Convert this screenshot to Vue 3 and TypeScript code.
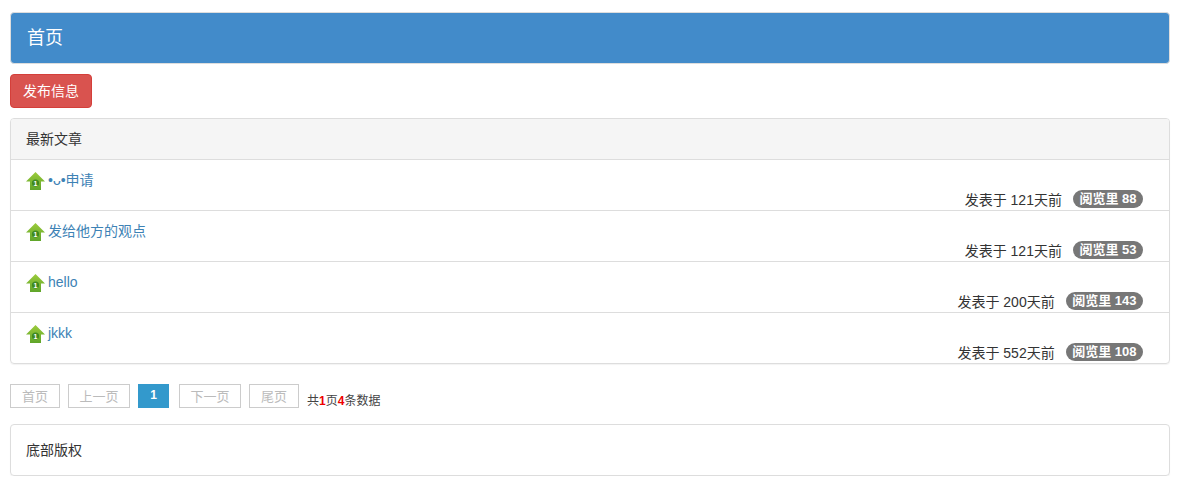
<script setup lang="ts">
interface Post { title: string; days: number; views: number }
const posts: Post[] = [
  { title: '•ᴗ•申请', days: 121, views: 88 },
  { title: '发给他方的观点', days: 121, views: 53 },
  { title: 'hello', days: 200, views: 143 },
  { title: 'jkkk', days: 552, views: 108 },
]
</script>

<template>
  <div class="page">
    <div class="heading">首页</div>
    <button class="publish" type="button">发布信息</button>
    <section class="panel">
      <div class="panel-head">最新文章</div>
      <div v-for="p in posts" :key="p.title" class="row">
        <div class="title-line">
          <svg class="arrow" width="20" height="20" viewBox="0 0 20 20" aria-hidden="true">
            <defs>
              <linearGradient id="ag" x1="0" y1="0" x2="0" y2="1">
                <stop offset="0" stop-color="#9ccb3b" />
                <stop offset="1" stop-color="#5fa52a" />
              </linearGradient>
            </defs>
            <path d="M9.5 1 L19 10.5 L15 10.5 L15 19 L4 19 L4 10.5 L0 10.5 Z" fill="url(#ag)" />
            <circle cx="9.5" cy="12" r="3.6" fill="#3f8a1f" />
            <text x="9.5" y="14.5" text-anchor="middle" class="arrow-num">1</text>
          </svg>
          <a class="title" href="#">{{ p.title }}</a>
        </div>
        <div class="meta">
          <span class="when">发表于 {{ p.days }}天前</span>
          <span class="badge">阅览里 {{ p.views }}</span>
        </div>
      </div>
    </section>
    <nav class="pager">
      <span class="pg wide-2">首页</span>
      <span class="pg wide-3">上一页</span>
      <span class="pg current">1</span>
      <span class="pg wide-3">下一页</span>
      <span class="pg wide-2">尾页</span>
      <span class="summary">共<b>1</b>页<b>4</b>条数据</span>
    </nav>
    <footer class="foot">底部版权</footer>
  </div>
</template>

<style>
html, body { margin: 0; background: #fff; }
</style>

<style scoped>
.page {
  box-sizing: border-box;
  width: 1177px;
  padding: 12px 7px 0 10px;
  font-family: "Liberation Sans", "Noto Sans CJK SC", sans-serif;
  font-size: 14px;
  line-height: 20px;
  color: #333;
  display: flex;
  flex-direction: column;
  align-items: stretch;
}
.heading {
  box-sizing: border-box;
  height: 52px;
  padding: 15px 16px;
  background: #428bca;
  border: 1px solid #ddd;
  border-radius: 4px;
  color: #fff;
  font-size: 18px;
  line-height: 20px;
}
.publish {
  align-self: flex-start;
  box-sizing: border-box;
  width: 82px;
  height: 34px;
  margin-top: 10px;
  padding: 0;
  background: #d9534f;
  border: 1px solid #d43f3a;
  border-radius: 4px;
  color: #fff;
  font: inherit;
}
.panel {
  margin-top: 10px;
  border: 1px solid #ddd;
  border-radius: 4px;
  box-shadow: 0 1px 1px rgba(0, 0, 0, 0.05);
  overflow: hidden;
}
.panel-head {
  box-sizing: border-box;
  height: 41px;
  padding: 10px 15px;
  background: #f5f5f5;
  border-bottom: 1px solid #ddd;
}
.row {
  box-sizing: border-box;
  height: 51px;
  padding: 10px 26px 0 15px;
  border-bottom: 1px solid #ddd;
}
.row:last-child { height: 50px; border-bottom: 0; }
.title-line {
  display: flex;
  align-items: center;
  height: 20px;
}
.arrow { margin-right: 2px; margin-top: 2px; flex: none; }
.arrow-num {
  font-family: "Liberation Sans", sans-serif;
  font-size: 7px;
  font-weight: 700;
  fill: #fff;
}
.title { color: #3d82b5; text-decoration: none; }
.meta {
  display: flex;
  justify-content: flex-end;
  align-items: flex-start;
  height: 20px;
}
.when { margin-right: 11px; }
.badge {
  box-sizing: border-box;
  height: 18px;
  padding: 0 6.5px;
  background: #777;
  border-radius: 10px;
  color: #fff;
  font-size: 13px;
  font-weight: 700;
  line-height: 18px;
  white-space: nowrap;
}
.pager {
  display: flex;
  align-items: flex-start;
  gap: 8px;
  margin-top: 20px;
  height: 24px;
}
.pg {
  box-sizing: border-box;
  height: 24px;
  border: 1px solid #ccc;
  color: #bbb;
  font-size: 13px;
  line-height: 24px;
  text-align: center;
}
.wide-2 { width: 50px; }
.wide-3 { width: 62px; }
.pg.current {
  width: 31px;
  margin-right: 2px;
  background: #3399cc;
  border-color: #3399cc;
  color: #fff;
  font-weight: 700;
  font-size: 12px;
  line-height: 20px;
}
.summary {
  font-size: 12px;
  line-height: 35px;
  color: #444;
}
.summary b { color: #e00; }
.foot {
  box-sizing: border-box;
  height: 52px;
  margin-top: 16px;
  padding: 15px;
  border: 1px solid #ddd;
  border-radius: 4px;
  box-shadow: 0 1px 1px rgba(0, 0, 0, 0.05);
}
</style>
